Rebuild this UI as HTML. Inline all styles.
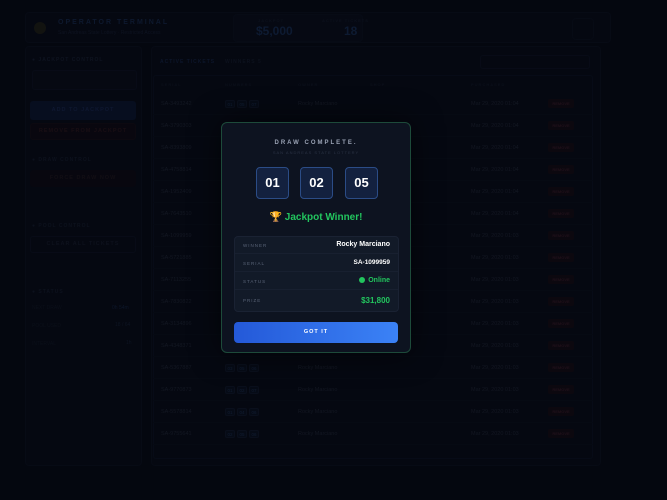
<!DOCTYPE html>
<html><head><meta charset="utf-8"><style>
*{margin:0;padding:0;box-sizing:border-box}
body{width:667px;height:500px;background:#060a14;font-family:"Liberation Sans",sans-serif;position:relative;overflow:hidden;color:#2a3346}
.a{position:absolute}
.panel{position:absolute;background:#080d19;border:1px solid #0e1424;border-radius:4px}
.t{font-size:5px;letter-spacing:1px;font-weight:bold}
.row{position:absolute;left:153px;width:440px;height:22px;border-bottom:1px solid #0c1220;font-size:5.5px;color:#2a3244}
.row span{position:absolute;top:8px}
.nb{display:inline-block;width:10px;height:8px;border:1px solid #152036;background:#0b1426;color:#24406a;font-size:4.5px;text-align:center;line-height:7px;margin-right:2px;border-radius:2px;font-style:normal}
.rm{position:absolute;left:395px;top:6px;width:26px;height:9px;background:#1a0e15;color:#4a2230;font-size:4px;font-weight:bold;text-align:center;line-height:9px;border-radius:2px;font-style:normal}
.ov{position:absolute;left:0;top:0;width:667px;height:500px;background:rgba(3,5,11,0.6)}
.modal{position:absolute;left:221px;top:122px;width:190px;height:231px;background:#0d1320;border:1px solid #1d4a3a;border-radius:6px;box-shadow:0 0 30px rgba(0,0,0,.6)}
.box{position:absolute;top:44px;width:33px;height:32px;background:#13213f;border:1.5px solid #2b4c86;border-radius:4px;color:#fff;font-weight:900;font-size:13px;text-align:center;line-height:30px}
.kv{position:absolute;left:13px;width:163px;height:18px;border-bottom:1px solid #182030;font-size:4.5px;letter-spacing:1px;color:#5a6478}
.kv b{position:absolute;right:8px;top:5px;font-size:7px;letter-spacing:0;color:#fff}
.kv i{position:absolute;left:8px;top:7px;font-style:normal}
</style></head><body>
<div class="panel" style="left:25px;top:12px;width:586px;height:31px"></div>
<div class="a" style="left:34px;top:22px;width:12px;height:12px;border-radius:50%;background:#2a2a18"></div>
<div class="a t" style="left:58px;top:19px;color:#1d3560;font-size:7px;letter-spacing:2px">OPERATOR TERMINAL</div>
<div class="a" style="left:58px;top:30px;color:#1d2840;font-size:5px">San Andreas State Lottery · Restricted Access</div>
<div class="panel" style="left:233px;top:14px;width:130px;height:28px;background:#0a1120"></div>
<div class="a t" style="left:258px;top:18px;color:#1a2235;font-size:4px">JACKPOT</div>
<div class="a" style="left:256px;top:24px;color:#1d3a6a;font-size:12px;font-weight:bold">$5,000</div>
<div class="a t" style="left:322px;top:18px;color:#1a2235;font-size:4px">ACTIVE TICKETS</div>
<div class="a" style="left:344px;top:24px;color:#1d3a6a;font-size:12px;font-weight:bold">18</div>
<div class="panel" style="left:572px;top:18px;width:22px;height:22px"></div>

<div class="panel" style="left:25px;top:46px;width:117px;height:420px"></div>
<div class="a t" style="left:32px;top:57px;color:#1f2a40">● JACKPOT CONTROL</div>
<div class="a" style="left:32px;top:70px;width:105px;height:20px;background:#0a0f1c;border:1px solid #0f1628;border-radius:3px"></div>
<div class="a" style="left:30px;top:101px;width:106px;height:19px;background:#0e1c3c;border-radius:3px;color:#1f3468;font-size:5.5px;font-weight:bold;text-align:center;line-height:19px;letter-spacing:1px">ADD TO JACKPOT</div>
<div class="a" style="left:30px;top:123px;width:106px;height:17px;background:#130c14;border:1px solid #1a1018;border-radius:3px;color:#3a1c22;font-size:5.5px;font-weight:bold;text-align:center;line-height:15px;letter-spacing:1px">REMOVE FROM JACKPOT</div>
<div class="a t" style="left:32px;top:157px;color:#1b2438">● DRAW CONTROL</div>
<div class="a" style="left:30px;top:170px;width:106px;height:17px;background:#0f0c14;border-radius:3px;color:#2a1c22;font-size:5.5px;font-weight:bold;text-align:center;line-height:17px;letter-spacing:1px">FORCE DRAW NOW</div>
<div class="a t" style="left:32px;top:223px;color:#1b2438">● POOL CONTROL</div>
<div class="a" style="left:30px;top:236px;width:106px;height:17px;border:1px solid #0f1628;border-radius:3px;color:#1c2336;font-size:5.5px;font-weight:bold;text-align:center;line-height:15px;letter-spacing:1px">CLEAR ALL TICKETS</div>
<div class="a t" style="left:32px;top:289px;color:#1b2438">● STATUS</div>
<div class="a" style="left:32px;top:305px;font-size:5px;color:#161e2e">NEXT DRAW</div><div class="a" style="left:112px;top:305px;font-size:5px;color:#1a3058">0h 54m</div>
<div class="a" style="left:32px;top:323px;font-size:5px;color:#161e2e">POOL USED</div><div class="a" style="left:115px;top:322px;font-size:5px;color:#1c2a44">18 / 64</div>
<div class="a" style="left:32px;top:341px;font-size:5px;color:#161e2e">INTERVAL</div><div class="a" style="left:126px;top:340px;font-size:5px;color:#1c2a44">1h</div>

<div class="panel" style="left:151px;top:46px;width:450px;height:420px"></div>
<div class="a t" style="left:160px;top:59px;color:#1a2e58">ACTIVE TICKETS</div>
<div class="a t" style="left:225px;top:59px;color:#1a2438">WINNERS 5</div>
<div class="a" style="left:480px;top:55px;width:110px;height:14px;border:1px solid #0f1628;border-radius:3px"></div>
<div class="a" style="left:153px;top:75px;width:440px;height:384px;border:1px solid #0e1628;border-radius:3px"></div>
<div class="a t" style="left:161px;top:82px;color:#161e30;font-size:4px">SERIAL</div>
<div class="a t" style="left:225px;top:82px;color:#161e30;font-size:4px">NUMBERS</div>
<div class="a t" style="left:298px;top:82px;color:#161e30;font-size:4px">OWNER</div>
<div class="a t" style="left:370px;top:82px;color:#161e30;font-size:4px">SHOP</div>
<div class="a t" style="left:471px;top:82px;color:#161e30;font-size:4px">PURCHASED</div>

<div class="row" style="top:93px"><span style="left:8px">SA-3493242</span><span style="left:72px;top:7px"><i class="nb">01</i><i class="nb">05</i><i class="nb">07</i></span><span style="left:145px">Rocky Marciano</span><span style="left:318px">Mar 29, 2020 01:04</span><i class="rm">REMOVE</i></div>
<div class="row" style="top:115px"><span style="left:8px">SA-3790303</span><span style="left:318px">Mar 29, 2020 01:04</span><i class="rm">REMOVE</i></div>
<div class="row" style="top:137px"><span style="left:8px">SA-8393809</span><span style="left:318px">Mar 29, 2020 01:04</span><i class="rm">REMOVE</i></div>
<div class="row" style="top:159px"><span style="left:8px">SA-4758814</span><span style="left:318px">Mar 29, 2020 01:04</span><i class="rm">REMOVE</i></div>
<div class="row" style="top:181px"><span style="left:8px">SA-1952409</span><span style="left:318px">Mar 29, 2020 01:04</span><i class="rm">REMOVE</i></div>
<div class="row" style="top:203px"><span style="left:8px">SA-7643510</span><span style="left:318px">Mar 29, 2020 01:04</span><i class="rm">REMOVE</i></div>
<div class="row" style="top:225px"><span style="left:8px">SA-1099959</span><span style="left:318px">Mar 29, 2020 01:03</span><i class="rm">REMOVE</i></div>
<div class="row" style="top:247px"><span style="left:8px">SA-5721885</span><span style="left:318px">Mar 29, 2020 01:03</span><i class="rm">REMOVE</i></div>
<div class="row" style="top:269px"><span style="left:8px">SA-7113255</span><span style="left:318px">Mar 29, 2020 01:03</span><i class="rm">REMOVE</i></div>
<div class="row" style="top:291px"><span style="left:8px">SA-7830822</span><span style="left:318px">Mar 29, 2020 01:03</span><i class="rm">REMOVE</i></div>
<div class="row" style="top:313px"><span style="left:8px">SA-3134896</span><span style="left:318px">Mar 29, 2020 01:03</span><i class="rm">REMOVE</i></div>
<div class="row" style="top:335px"><span style="left:8px">SA-4348371</span><span style="left:318px">Mar 29, 2020 01:03</span><i class="rm">REMOVE</i></div>
<div class="row" style="top:357px"><span style="left:8px">SA-5367887</span><span style="left:72px;top:7px"><i class="nb">03</i><i class="nb">05</i><i class="nb">06</i></span><span style="left:145px">Rocky Marciano</span><span style="left:318px">Mar 29, 2020 01:03</span><i class="rm">REMOVE</i></div>
<div class="row" style="top:379px"><span style="left:8px">SA-9770873</span><span style="left:72px;top:7px"><i class="nb">01</i><i class="nb">02</i><i class="nb">07</i></span><span style="left:145px">Rocky Marciano</span><span style="left:318px">Mar 29, 2020 01:03</span><i class="rm">REMOVE</i></div>
<div class="row" style="top:401px"><span style="left:8px">SA-5578814</span><span style="left:72px;top:7px"><i class="nb">01</i><i class="nb">04</i><i class="nb">06</i></span><span style="left:145px">Rocky Marciano</span><span style="left:318px">Mar 29, 2020 01:03</span><i class="rm">REMOVE</i></div>
<div class="row" style="top:423px"><span style="left:8px">SA-9755641</span><span style="left:72px;top:7px"><i class="nb">02</i><i class="nb">05</i><i class="nb">06</i></span><span style="left:145px">Rocky Marciano</span><span style="left:318px">Mar 29, 2020 01:03</span><i class="rm">REMOVE</i></div>

<div class="ov"></div>

<div class="modal">
<div class="a" style="left:0;width:188px;top:17px;text-align:center;color:#9aa3b5;font-size:6px;font-weight:bold;letter-spacing:2px">DRAW COMPLETE.</div>
<div class="a" style="left:0;width:188px;top:27px;text-align:center;color:#2c3446;font-size:4px;letter-spacing:1px">SAN ANDREAS STATE LOTTERY</div>
<div class="box" style="left:34px">01</div>
<div class="box" style="left:78px">02</div>
<div class="box" style="left:123px">05</div>
<div class="a" style="left:0;width:188px;top:89px;text-align:center;color:#22c55e;font-size:10px;font-weight:bold">🏆 Jackpot Winner!</div>
<div class="a" style="left:12px;top:113px;width:165px;height:76px;background:#121a28;border:1px solid #1a2233;border-radius:4px"></div>
<div class="kv" style="top:113px"><i>WINNER</i><b>Rocky Marciano</b></div>
<div class="kv" style="top:131px"><i>SERIAL</i><b style="font-size:6.5px">SA-1099959</b></div>
<div class="kv" style="top:149px"><i>STATUS</i><b style="color:#22c55e"><span style="display:inline-block;width:6px;height:6px;border-radius:50%;background:#22c55e;margin-right:3px;vertical-align:-1px"></span>Online</b></div>
<div class="kv" style="top:168px;border:none;height:20px"><i>PRIZE</i><b style="color:#22c55e;font-size:8px;top:5px">$31,800</b></div>
<div class="a" style="left:12px;top:199px;width:164px;height:21px;border-radius:4px;background:linear-gradient(90deg,#2459d8,#3b82f6);color:#fff;font-size:5.5px;font-weight:bold;text-align:center;line-height:21px;letter-spacing:1px">GOT IT</div>
</div>
</body></html>
